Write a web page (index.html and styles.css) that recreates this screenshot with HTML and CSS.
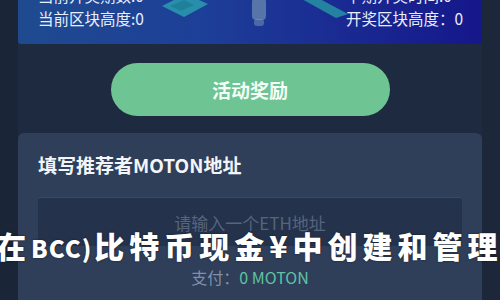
FILE: index.html
```html
<!DOCTYPE html>
<html lang="zh">
<head>
<meta charset="utf-8">
<link rel="stylesheet" href="styles.css">
</head>
<body>
<div class="page">
  <div class="banner">
    <svg class="deco" width="464" height="44" viewBox="0 0 464 44">
      <polygon points="144,6 168,-6 190,4 166,17" fill="#2aa3b0" opacity="0.8"/>
      <polygon points="152,6 166,0 176,5 163,11" fill="#1d7f95" opacity="0.85"/>
      <rect x="234" y="-2" width="14" height="22" rx="4" fill="#7f9fb8" opacity="0.6"/>
      <rect x="236" y="19" width="10" height="7" rx="3" fill="#8aa6b8" opacity="0.45"/>
      <polygon points="282,-2 300,-2 330,14 318,18" fill="#2aa7a8" opacity="0.7"/>
    </svg>
    <div class="col left">
      <div class="line cut">当前开奖期数:0</div>
      <div class="line">当前区块高度:0</div>
    </div>
    <div class="col right">
      <div class="line cut">下期开奖时间:0</div>
      <div class="line">开奖区块高度：0</div>
    </div>
  </div>
  <div class="btn-row">
    <button class="btn">活动奖励</button>
  </div>
  <div class="card">
    <div class="card-title">填写推荐者MOTON地址</div>
    <div class="input">请输入一个ETH地址</div>
    <div class="pay"><span class="pay-label">支付：</span><span class="pay-val">0 MOTON</span></div>
  </div>
</div>
<div class="overlay">在<span class="latin">BCC)</span>比特币现金¥中创建和管理</div>
</body>
</html>
```

FILE: styles.css
```css
html, body {
  margin: 0;
  padding: 0;
}
body {
  width: 500px;
  height: 300px;
  overflow: hidden;
  background: #1c2739;
  font-family: "Noto Sans CJK SC", "Noto Sans", sans-serif;
  position: relative;
}
.page {
  height: 300px;
  width: 482px;
  padding: 0 0 0 18px;
  box-sizing: border-box;
  background: linear-gradient(to right, #1b2538 0, #1b2538 18px, #1e2a3f 18px);
}
.banner {
  position: relative;
  height: 44px;
  background: linear-gradient(to right, #1f4a8f 0%, #1d3f98 40%, #1a2a92 70%, #15178a 100%);
  border-radius: 0 0 3px 3px;
  display: flex;
  justify-content: space-between;
  overflow: hidden;
  color: #e8eefc;
  font-size: 15.5px;
}
.deco {
  position: absolute;
  left: 0;
  top: 0;
}
.col {
  position: relative;
  margin-top: -16px;
  line-height: 23px;
}
.left { padding-left: 20px; }
.right { padding-right: 19px; }
.btn-row {
  padding-top: 19px;
  display: flex;
  justify-content: center;
}
.btn {
  width: 279px;
  height: 53px;
  border: none;
  border-radius: 27px;
  background: #6ec493;
  color: #f4fff8;
  font-family: "Noto Sans CJK SC", sans-serif;
  font-size: 19px;
  font-weight: 700;
}
.card {
  margin-top: 17px;
  background: #2f3e59;
  border-radius: 6px 6px 0 0;
  height: 200px;
  padding: 19px 20px 0;
}
.card-title {
  color: #f2f5fa;
  font-size: 19px;
  font-weight: 700;
  line-height: 26px;
}
.input {
  margin-top: 19px;
  height: 48px;
  background: #25324b;
  border-top: 1px solid #3a4a66;
  border-radius: 3px;
  color: #56647d;
  font-size: 17px;
  display: flex;
  align-items: center;
  justify-content: center;
}
.pay {
  margin-top: 20px;
  text-align: center;
  font-size: 16px;
  line-height: 22px;
}
.pay-label { color: #8090a8; }
.pay-val { color: #5fc3a2; }
.overlay {
  position: absolute;
  left: -4px;
  top: 225px;
  white-space: nowrap;
  color: #ffffff;
  font-family: "Noto Sans CJK SC", sans-serif;
  font-weight: 900;
  font-size: 30px;
  line-height: 40px;
  letter-spacing: 5px;
  text-shadow: 0 0 2px rgba(0,0,0,0.6);
}
.latin {
  font-size: 24px;
  letter-spacing: 1px;
  margin-right: 2px;
}
```
